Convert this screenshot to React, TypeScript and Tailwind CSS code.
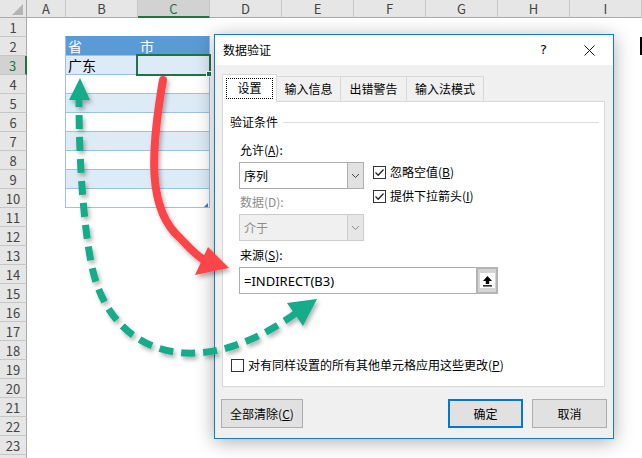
import React from "react";

const cols = ["A", "B", "C", "D", "E", "F", "G", "H", "I"];
const rows = Array.from({ length: 24 }, (_, i) => i + 1);

function Chevron({ color = "#404040" }: { color?: string }) {
  return (
    <svg width="9" height="6" viewBox="0 0 9 6">
      <polyline points="1,1 4.5,4.5 8,1" fill="none" stroke={color} strokeWidth="1" />
    </svg>
  );
}

function Check({ checked, children }: { checked?: boolean; children: React.ReactNode }) {
  return (
    <div className="flex items-center h-[16px] leading-[16px]">
      <div className="w-[13px] h-[13px] shrink-0 border border-[#333333] bg-white flex items-center justify-center">
        {checked && (
          <svg width="11" height="11" viewBox="0 0 11 11">
            <polyline points="1.5,5.5 4.2,8.2 9.5,2.5" fill="none" stroke="#222" strokeWidth="1.3" />
          </svg>
        )}
      </div>
      <span className="ml-[4px] whitespace-nowrap">{children}</span>
    </div>
  );
}

function Select({ value, disabled }: { value: string; disabled?: boolean }) {
  return (
    <div
      className={
        "flex h-[27px] w-[125px] border " +
        (disabled ? "border-[#cccccc] bg-[#f0f0f0] text-[#8c8c8c]" : "border-[#adadad] bg-white text-black")
      }
    >
      <div className="flex-1 pl-[4px] flex items-center">{value}</div>
      <div
        className={
          "w-[16px] flex items-center justify-center border-l " +
          (disabled ? "border-[#cccccc] bg-[#e6e6e6]" : "border-[#adadad] bg-[#e1e1e1]")
        }
      >
        <Chevron color={disabled ? "#8c8c8c" : "#404040"} />
      </div>
    </div>
  );
}

function Btn({ children, primary, w }: { children: React.ReactNode; primary?: boolean; w: string }) {
  return (
    <div
      className={
        w +
        " h-[29px] flex items-center justify-center bg-[#e1e1e1] " +
        (primary ? "border-2 border-[#0078d7]" : "border border-[#adadad]")
      }
    >
      {children}
    </div>
  );
}

function Dialog() {
  return (
    <div
      className="absolute left-[214px] top-[34px] w-[400px] h-[405px] border border-[#1a78c8] bg-[#f0f0f0] shadow-[0_3px_18px_rgba(0,0,0,0.32)] text-[12px] text-black"
      style={{ fontFamily: '"Noto Sans CJK SC", "Noto Sans", sans-serif' }}
    >
      <div className="h-[30px] bg-white flex items-center pl-[8px] pr-[12px]">
        <span>数据验证</span>
        <span className="ml-auto mr-[37px] text-[13px]" style={{ fontFamily: '"DejaVu Sans", sans-serif' }}>
          ?
        </span>
        <svg width="11" height="11" viewBox="0 0 11 11" className="mr-[6px]">
          <line x1="0.5" y1="0.5" x2="10.5" y2="10.5" stroke="#111" strokeWidth="1" />
          <line x1="10.5" y1="0.5" x2="0.5" y2="10.5" stroke="#111" strokeWidth="1" />
        </svg>
      </div>

      <div className="pt-[9px] pl-[7px]">
        <div className="flex items-end h-[27px]">
          <div className="relative z-10 w-[55px] h-[28px] -mb-px bg-white border-l border-t border-r border-[#d9d9d9] flex items-center justify-center">
            <div className="w-[47px] h-[21px] border border-dotted border-black flex items-center justify-center -mt-[1px]">
              设置
            </div>
          </div>
          <div className="w-[64px] h-[25px] border-t border-r border-[#d9d9d9] flex items-center justify-center">
            输入信息
          </div>
          <div className="w-[66px] h-[25px] border-t border-r border-[#d9d9d9] flex items-center justify-center">
            出错警告
          </div>
          <div className="w-[77px] h-[25px] border-t border-r border-[#d9d9d9] flex items-center justify-center">
            输入法模式
          </div>
        </div>

        <div className="w-[383px] h-[286px] bg-white border border-[#d9d9d9] leading-[16px]">
          <div className="flex items-center mt-[12px] ml-[7px] mr-[5px]">
            <span>验证条件</span>
            <div className="flex-1 ml-[5px] h-px bg-[#dcdcdc]" />
          </div>

          <div className="ml-[16px]">
            <div className="flex mt-[12px]">
              <div className="w-[125px]">
                <div className="pl-[1px]">
                  允许(<span className="underline">A</span>):
                </div>
                <div className="mt-[4px]">
                  <Select value="序列" />
                </div>
                <div className="pl-[1px] mt-[5px] text-[#8c8c8c]">数据(D):</div>
                <div className="mt-[4px]">
                  <Select value="介于" disabled />
                </div>
              </div>
              <div className="ml-[9px] pt-[22px]">
                <Check checked>
                  忽略空值(<span className="underline">B</span>)
                </Check>
                <div className="mt-[8px]">
                  <Check checked>
                    提供下拉箭头(<span className="underline">I</span>)
                  </Check>
                </div>
              </div>
            </div>

            <div className="pl-[1px] mt-[6px]">
              来源(<span className="underline">S</span>):
            </div>
            <div className="mt-[4px] flex w-[259px] h-[27px] border border-[#adadad] bg-white">
              <div
                className="flex-1 flex items-center pl-[4px] text-[13px]"
                style={{ fontFamily: '"Noto Sans", sans-serif' }}
              >
                =INDIRECT(B3)
              </div>
              <div className="w-[22px] -my-px -mr-px border-2 border-[#b4b4b4] bg-[#d4d4d4] flex items-center justify-center">
                <div className="w-[15px] h-[15px] bg-white flex items-center justify-center">
                  <svg width="11" height="12" viewBox="0 0 11 12">
                    <polygon points="5.5,1 1,6 3.8,6 3.8,9 7.2,9 7.2,6 10,6" fill="#000" />
                    <rect x="1" y="10.2" width="9" height="1.3" fill="#000" />
                  </svg>
                </div>
              </div>
            </div>
          </div>

          <div className="ml-[8px] mt-[63px]">
            <Check>
              对有同样设置的所有其他单元格应用这些更改(<span className="underline">P</span>)
            </Check>
          </div>
        </div>

        <div className="flex mt-[12px] -ml-[1px] pr-[6px]">
          <Btn w="w-[82px]">
            全部清除(<span className="underline">C</span>)
          </Btn>
          <div className="ml-auto flex gap-[9px]">
            <Btn w="w-[75px]" primary>
              确定
            </Btn>
            <Btn w="w-[75px]">取消</Btn>
          </div>
        </div>
      </div>
    </div>
  );
}

function Arrows() {
  return (
    <svg className="absolute left-0 top-0 z-20 pointer-events-none" width="642" height="458" viewBox="0 0 642 458">
      <defs>
        <filter id="sh" x="-20%" y="-20%" width="140%" height="140%">
          <feDropShadow dx="2" dy="3" stdDeviation="2" floodColor="#000" floodOpacity="0.3" />
        </filter>
      </defs>
      <g filter="url(#sh)">
        <path
          d="M163,80 C150,155 148,210 180,238 C188,246 194,254 204,260"
          fill="none"
          stroke="#fc4449"
          strokeWidth="8"
          strokeLinecap="round"
        />
        <polygon points="229,268 208,247 195,275" fill="#fc4449" />
      </g>
      <g filter="url(#sh)">
        <path
          d="M296,313 C262,338 222,355 185,353 C132,350 100,312 91,262 C84,226 79,165 79,99"
          fill="none"
          stroke="#12ab89"
          strokeWidth="7"
          strokeDasharray="14 8"
        />
        <polygon points="317,299 287,303 303,326" fill="#12ab89" />
        <polygon points="80,78 69,100 90,100" fill="#12ab89" />
      </g>
    </svg>
  );
}

export default function App() {
  return (
    <div
      className="relative w-[642px] h-[458px] overflow-hidden bg-white"
      style={{ fontFamily: '"Noto Sans CJK SC", "Noto Sans", sans-serif' }}
    >
      <div className="flex h-[18px] text-[13px] text-[#444444]">
        <div className="w-[27px] shrink-0 border-r border-b border-[#ababab] bg-[#e6e6e6] flex items-end justify-end pr-[3px] pb-[2px]">
          <svg width="11" height="11" viewBox="0 0 11 11">
            <polygon points="11,0 11,11 0,11" fill="#b4b4b4" />
          </svg>
        </div>
        {cols.map((c) => (
          <div
            key={c}
            className={
              (c === "A" ? "w-[39px] " : "w-[72px] ") +
              "shrink-0 border-r border-r-[#c6c6c6] flex items-center justify-center leading-none " +
              (c === "C"
                ? "bg-[#d2d2d2] text-[#217346] border-b-2 border-b-[#217346]"
                : "bg-[#e6e6e6] border-b border-b-[#ababab]")
            }
          >
            {c}
          </div>
        ))}
      </div>

      <div className="flex">
        <div className="w-[27px] shrink-0 flex flex-col text-[13px] text-[#444444]">
          {rows.map((r) => (
            <div
              key={r}
              className={
                "h-[19px] shrink-0 border-b border-b-[#c6c6c6] flex items-center justify-center leading-none " +
                (r === 3
                  ? "bg-[#d2d2d2] text-[#217346] border-r-2 border-r-[#217346]"
                  : "bg-[#e6e6e6] border-r border-r-[#ababab]")
              }
            >
              {r < 24 ? r : ""}
            </div>
          ))}
        </div>

        <div className="grid grid-cols-[39px_repeat(8,72px)] grid-rows-[repeat(24,19px)] text-[14px]">
          <div className="col-start-2 col-span-2 row-start-2 row-span-9 -ml-px -mt-px border-t border-t-[#5b9bd5] border-x border-x-[#9bc2e6] flex flex-col relative">
            {Array.from({ length: 9 }, (_, i) => (
              <div
                key={i}
                className={
                  "h-[19px] shrink-0 flex border-b border-b-[#9bc2e6] leading-[18px] " +
                  (i === 0 ? "bg-[#5b9bd5] text-white" : i % 2 === 1 ? "bg-[#ddebf7] text-black" : "bg-white text-black")
                }
              >
                <div className="w-[72px] pl-[2px]">{i === 0 ? "省" : i === 1 ? "广东" : ""}</div>
                <div className="flex-1 pl-[2px]">{i === 0 ? "市" : ""}</div>
              </div>
            ))}
            <svg className="absolute right-[1px] bottom-[1px]" width="4" height="4" viewBox="0 0 4 4">
              <polygon points="4,0 4,4 0,4" fill="#4472c4" />
            </svg>
          </div>
        </div>
      </div>

      {/* selected cell C3 */}
      <div className="absolute left-[136px] top-[54px] w-[75px] h-[22px] border-2 border-[#217346]" />
      <div className="absolute left-[206px] top-[71px] w-[6px] h-[6px] bg-[#217346] border border-white" />

      <div className="absolute left-[640px] top-[37px] w-[2px] h-[18px] bg-black" />

      <Dialog />
      <Arrows />
    </div>
  );
}
